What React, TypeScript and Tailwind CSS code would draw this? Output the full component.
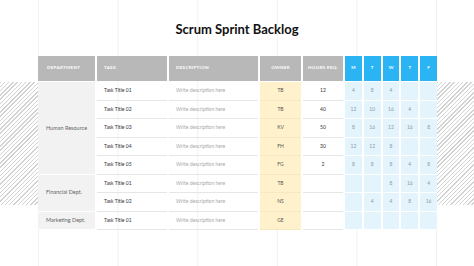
import React from 'react';

type Row = { task: string; owner: string; hours: string; days: string[] };

const rows: Row[] = [
  { task: 'Task Title 01', owner: 'TB', hours: '12', days: ['4', '8', '4', '', ''] },
  { task: 'Task Title 02', owner: 'TB', hours: '40', days: ['12', '10', '16', '4', ''] },
  { task: 'Task Title 03', owner: 'KV', hours: '50', days: ['8', '16', '12', '16', '8'] },
  { task: 'Task Title 04', owner: 'FH', hours: '30', days: ['12', '12', '8', '', ''] },
  { task: 'Task Title 05', owner: 'FG', hours: '2', days: ['8', '8', '8', '4', '8'] },
  { task: 'Task Title 01', owner: 'TB', hours: '', days: ['', '', '8', '16', '4'] },
  { task: 'Task Title 02', owner: 'NS', hours: '', days: ['', '4', '4', '8', '16'] },
  { task: 'Task Title 01', owner: 'GE', hours: '', days: ['', '', '', '', ''] },
];

const depts: Record<number, { name: string; cls: string }> = {
  0: { name: 'Human Resource', cls: 'row-span-5' },
  5: { name: 'Financial Dept.', cls: 'row-span-2' },
  7: { name: 'Marketing Dept.', cls: 'row-span-1' },
};

const headGray = 'h-[25px] bg-[#b8b8b8] text-white font-bold text-[4.5px] tracking-[0.3px] flex items-center';
const headBlue = 'h-[25px] bg-[#2bb4f3] text-white font-bold text-[4.5px] flex items-center justify-center';

function Hatch() {
  return (
    <div className="w-full pt-[26px]">
      <div className="h-[123px] w-full bg-[repeating-linear-gradient(135deg,#d2d2d2_0px,#d2d2d2_1px,#ffffff_1px,#ffffff_3px)]" />
    </div>
  );
}

export default function App() {
  return (
    <div
      className="w-[474px] h-[266px] overflow-hidden bg-white [background-image:linear-gradient(to_right,#f1f1f1_1px,transparent_1px)] [background-size:79.6px_100%] [background-position:38px_0]"
      style={{ fontFamily: 'Lato, "Noto Sans", sans-serif' }}
    >
      <div className="h-[56px] flex justify-center pt-[22px]">
        <h1 className="text-[13px] leading-[15px] font-bold text-[#111]">Scrum Sprint Backlog</h1>
      </div>
      <div className="flex">
        <div className="w-[38px]">
          <Hatch />
        </div>
        <div className="grid grid-cols-[57px_70px_89px_41px_40px_repeat(5,16.8px)] grid-rows-[26px_repeat(8,18.5px)] gap-x-[2px] w-[399px]">
          <div className={`${headGray} pl-[9px]`}>DEPARTMENT</div>
          <div className={`${headGray} pl-[7px]`}>TASK</div>
          <div className={`${headGray} pl-[7px]`}>DESCRIPTION</div>
          <div className={`${headGray} justify-center`}>OWNER</div>
          <div className={`${headGray} justify-center`}>HOURS REQ.</div>
          <div className={headBlue}>M</div>
          <div className={headBlue}>T</div>
          <div className={headBlue}>W</div>
          <div className={headBlue}>T</div>
          <div className={headBlue}>F</div>
          {rows.map((r, i) => (
            <React.Fragment key={i}>
              {depts[i] && (
                <div
                  className={`${depts[i].cls} bg-[#f2f2f2] border-b border-white flex items-center pl-[8px] text-[5.5px] text-[#666]`}
                >
                  {depts[i].name}
                </div>
              )}
              <div className="border-b border-[#e6e6e6] flex items-center pl-[7px] text-[5px] text-[#333]">{r.task}</div>
              <div className="border-b border-[#e6e6e6] flex items-center pl-[7px] text-[5px] text-[#a8a8a8]">
                Write description here
              </div>
              <div className="bg-[#fff1cb] border-b border-[#f8e8c0] flex items-center justify-center text-[5px] text-[#555]">
                {r.owner}
              </div>
              <div className="border-b border-[#e6e6e6] flex items-center justify-center text-[5px] text-[#333]">{r.hours}</div>
              {r.days.map((d, j) => (
                <div key={j} className="bg-[#e3f4fd] border-b border-white flex items-center justify-center text-[5px] text-[#8f9aa3]">
                  {d}
                </div>
              ))}
            </React.Fragment>
          ))}
        </div>
        <div className="w-[37px]">
          <Hatch />
        </div>
      </div>
    </div>
  );
}
